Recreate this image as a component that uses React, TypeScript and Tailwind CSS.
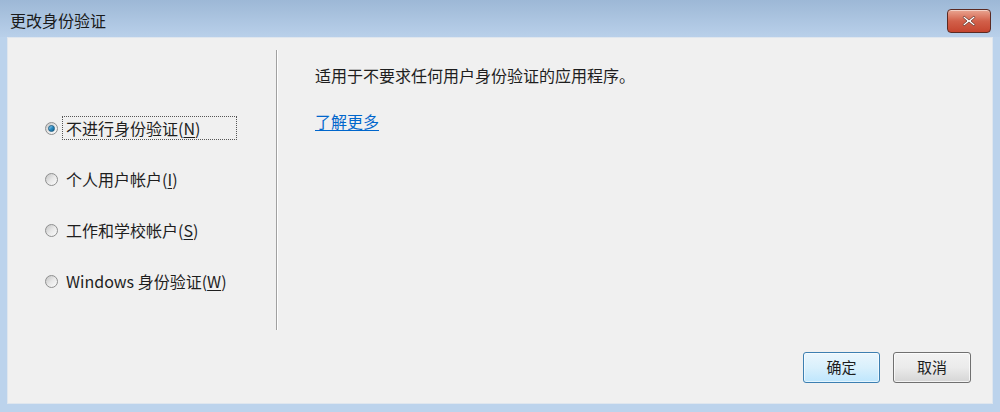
import React, { useState } from "react";

const font = { fontFamily: '"Noto Sans CJK SC", "Noto Sans", sans-serif' };

const options = [
  { id: "none", label: "不进行身份验证", key: "N" },
  { id: "personal", label: "个人用户帐户", key: "I" },
  { id: "work", label: "工作和学校帐户", key: "S" },
  { id: "windows", label: "Windows 身份验证", key: "W" },
];

function Radio({ checked }: { checked: boolean }) {
  return (
    <span className="relative flex h-[13px] w-[13px] shrink-0 items-center justify-center rounded-full border border-[#8e8f8f] bg-gradient-to-br from-[#c4c4c4] via-[#e8e8e8] to-[#fbfbfb]">
      {checked && (
        <span className="h-[7px] w-[7px] rounded-full border border-[#1b5f86] bg-gradient-to-br from-[#9fd6f3] via-[#2a8dc4] to-[#115b88]" />
      )}
    </span>
  );
}

export default function App() {
  const [selected, setSelected] = useState("none");

  return (
    <div
      className="flex h-[412px] w-[1000px] flex-col overflow-hidden bg-[#bcd3ec] text-[#1e1e1e]"
      style={font}
    >
      {/* Title bar */}
      <div className="flex h-[37px] shrink-0 items-start justify-between bg-gradient-to-b from-[#9db8d6] to-[#b9d0ea] pl-[10px] pr-[9px]">
        <span className="mt-[8px] text-[16px] leading-[24px] text-[#1a1a1a]">更改身份验证</span>
        <button className="mt-[9px] flex h-[24px] w-[44px] items-center justify-center rounded-[4px] border border-[#5b2a22] bg-gradient-to-b from-[#e9a592] via-[#d2604a] to-[#c5452f] shadow-[inset_0_1px_0_rgba(255,255,255,0.5)]">
          <svg width="14" height="12" viewBox="0 0 14 12">
            <path
              d="M2 1 L7 5 L12 1 L13 2.5 L9 6 L13 9.5 L12 11 L7 7 L2 11 L1 9.5 L5 6 L1 2.5 Z"
              fill="#ffffff"
              stroke="#6b3a30"
              strokeWidth="0.8"
              strokeLinejoin="round"
            />
          </svg>
        </button>
      </div>

      {/* Client area */}
      <div className="mx-[7px] mb-[8px] flex flex-1 flex-col border border-[#dfe6ee] bg-[#f0f0f0]">
        <div className="flex flex-1 pt-[12px]">
          {/* Left column with radios */}
          <div className="flex h-[280px] w-[268px] flex-col gap-[27px] pl-[37px] pt-[66px]">
            {options.map((o) => {
              const checked = selected === o.id;
              return (
                <div
                  key={o.id}
                  onClick={() => setSelected(o.id)}
                  className="flex h-[24px] cursor-default items-center gap-[4px]"
                >
                  <Radio checked={checked} />
                  <span
                    className={`flex h-[24px] w-[175px] items-center px-[3px] text-[16px] ${
                      checked ? "border border-dotted border-[#555]" : "border border-transparent"
                    }`}
                  >
                    {o.label}(<span className="underline underline-offset-2">{o.key}</span>)
                  </span>
                </div>
              );
            })}
          </div>

          {/* Separator */}
          <div className="flex h-[280px] shrink-0">
            <div className="w-px bg-[#a0a0a0]" />
            <div className="w-px bg-white" />
          </div>

          {/* Right column */}
          <div className="flex flex-col pl-[37px] pt-[13px]">
            <p className="text-[16px] leading-[24px]">适用于不要求任何用户身份验证的应用程序。</p>
            <a className="mt-[22px] w-fit cursor-pointer text-[16px] leading-[24px] text-[#0066cc] underline underline-offset-2">
              了解更多
            </a>
          </div>
        </div>

        {/* Buttons */}
        <div className="flex justify-end gap-[13px] pb-[20px] pr-[21px]">
          <button className="h-[31px] w-[77px] rounded-[3px] border border-[#3c7fb1] bg-gradient-to-b from-[#eaf6fd] via-[#d9f0fc] to-[#bee6fd] text-[15px] shadow-[inset_0_0_0_1px_rgba(255,255,255,0.6)]">
            确定
          </button>
          <button className="h-[31px] w-[78px] rounded-[3px] border border-[#707070] bg-gradient-to-b from-[#f2f2f2] via-[#ebebeb] to-[#d5d5d5] text-[15px] shadow-[inset_0_0_0_1px_rgba(255,255,255,0.7)]">
            取消
          </button>
        </div>
      </div>
    </div>
  );
}
